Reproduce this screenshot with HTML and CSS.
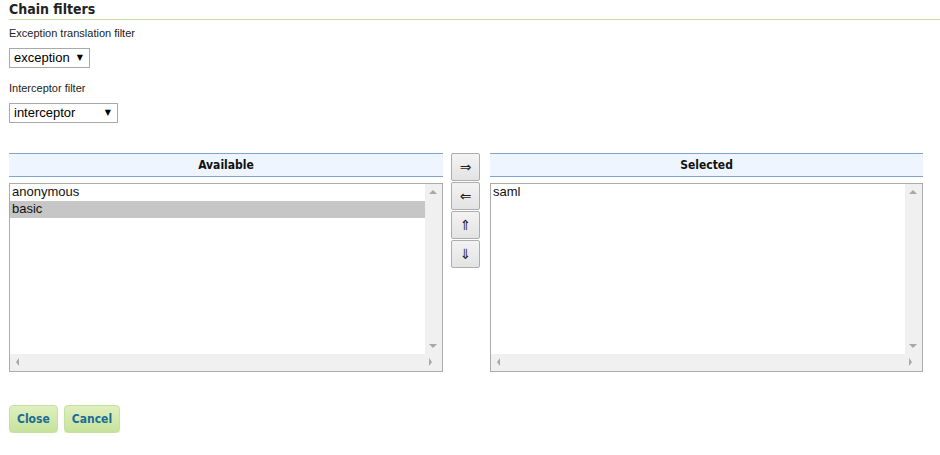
FILE: index.html
```html
<!DOCTYPE html>
<html lang="en">
<head>
  <meta charset="UTF-8">
  <title>Chain filters</title>
  <link rel="stylesheet" href="styles.css">
</head>
<body>
  <div class="page">
    <h2 class="title">Chain filters</h2>

    <div class="field">
      <div class="field__label">Exception translation filter</div>
      <div class="select select--short">exception <span class="select__arrow">&#9660;</span></div>
    </div>

    <div class="field">
      <div class="field__label">Interceptor filter</div>
      <div class="select select--long">interceptor <span class="select__arrow">&#9660;</span></div>
    </div>

    <div class="picker">
      <div class="panel">
        <div class="panel__head">Available</div>
        <div class="list">
          <ul class="list__items">
            <li>anonymous</li>
            <li class="is-selected">basic</li>
          </ul>
          <div class="list__vbar"><span class="tri tri--up"></span><span class="tri tri--down"></span></div>
          <div class="list__hbar"><span class="tri tri--left"></span><span class="tri tri--right"></span></div>
        </div>
      </div>

      <div class="moves">
        <button class="move">&rArr;</button>
        <button class="move">&lArr;</button>
        <button class="move">&uArr;</button>
        <button class="move">&dArr;</button>
      </div>

      <div class="panel panel--right">
        <div class="panel__head">Selected</div>
        <div class="list">
          <ul class="list__items">
            <li>saml</li>
          </ul>
          <div class="list__vbar"><span class="tri tri--up"></span><span class="tri tri--down"></span></div>
          <div class="list__hbar"><span class="tri tri--left"></span><span class="tri tri--right"></span></div>
        </div>
      </div>
    </div>

    <div class="actions">
      <button class="btn">Close</button>
      <button class="btn">Cancel</button>
    </div>
  </div>
</body>
</html>
```

FILE: styles.css
```css
* {
  box-sizing: border-box;
}

body, html {
  margin: 0;
  padding: 0;
  background: #fff;
}

body {
  font-family: "DejaVu Sans Condensed", "DejaVu Sans", sans-serif;
  color: #222;
}

.page {
  padding: 1px 0 0 9px;
}

.title {
  margin: 0;
  font-size: 14px;
  line-height: 17px;
  font-weight: bold;
  color: #222;
  padding-bottom: 1px;
  border-bottom: 1px solid #c9dca4;
}

.field__label {
  font-family: "Liberation Sans", Arial, sans-serif;
  font-size: 11px;
  line-height: 13px;
  margin-top: 7px;
  color: #222;
}

.field + .field .field__label {
  margin-top: 14px;
}

.select {
  margin-top: 8px;
  height: 20px;
  border: 1px solid #a9a9a9;
  font-family: "Liberation Sans", Arial, sans-serif;
  font-size: 13px;
  line-height: 18px;
  padding-left: 4px;
  color: #000;
  display: flex;
  align-items: center;
  justify-content: space-between;
}

.select--short {
  width: 81px;
}

.select--long {
  width: 109px;
}

.select__arrow {
  font-family: "DejaVu Sans", sans-serif;
  font-size: 8px;
  padding-right: 6px;
}

.picker {
  margin-top: 30px;
  display: flex;
  align-items: flex-start;
}

.panel {
  width: 434px;
}

.panel--right {
  width: 433px;
  margin-left: 10px;
}

.panel__head {
  height: 24px;
  background: #eef5fe;
  border-top: 1px solid #7fa5cc;
  border-bottom: 1px solid #7fa5cc;
  text-align: center;
  font-size: 12px;
  font-weight: bold;
  line-height: 22px;
  color: #111;
}

.list {
  margin-top: 6px;
  height: 189px;
  border: 1px solid #ababab;
  display: grid;
  grid-template-columns: 1fr 17px;
  grid-template-rows: 1fr 17px;
}

.list__items {
  margin: 0;
  padding: 0;
  list-style: none;
  font-family: "Liberation Sans", Arial, sans-serif;
  font-size: 13px;
  color: #111;
}

.list__items li {
  height: 17px;
  line-height: 15px;
  padding-left: 2px;
}

.list__items li.is-selected {
  background: #c6c6c6;
}

.list__vbar,
.list__hbar {
  background: #f0f0f0;
  position: relative;
}

.list__hbar {
  grid-column: 1 / -1;
}

.tri {
  position: absolute;
  width: 0;
  height: 0;
  border: 4px solid transparent;
}

.tri--up {
  top: 2px;
  left: 4px;
  border-bottom-color: #a8a8a8;
}

.tri--down {
  bottom: 2px;
  left: 4px;
  border-top-color: #a8a8a8;
}

.tri--left {
  top: 4px;
  left: 3px;
  border-width: 4px 3px;
  border-right-color: #a8a8a8;
}

.tri--right {
  top: 4px;
  right: 7px;
  border-width: 4px 3px;
  border-left-color: #a8a8a8;
}

.moves {
  margin-left: 8px;
  display: flex;
  flex-direction: column;
  gap: 1px;
}

.move {
  width: 29px;
  height: 28px;
  padding: 0;
  border: 1px solid #adadad;
  border-radius: 2px;
  background: linear-gradient(#f3f3f3, #e3e3e3);
  font-family: "DejaVu Sans", sans-serif;
  font-size: 14px;
  line-height: 1;
  color: #1e1e2a;
}

.actions {
  margin-top: 33px;
  display: flex;
  gap: 6px;
}

.btn {
  height: 28px;
  padding: 0 7px;
  border: 1px solid #c6e0a0;
  border-radius: 4px;
  background: linear-gradient(#dff0bf, #c6e29c);
  font-family: "DejaVu Sans Condensed", "DejaVu Sans", sans-serif;
  font-size: 12px;
  font-weight: bold;
  color: #1c6c94;
  box-shadow: 0 1px 1px rgba(0, 0, 0, .08);
}
```
